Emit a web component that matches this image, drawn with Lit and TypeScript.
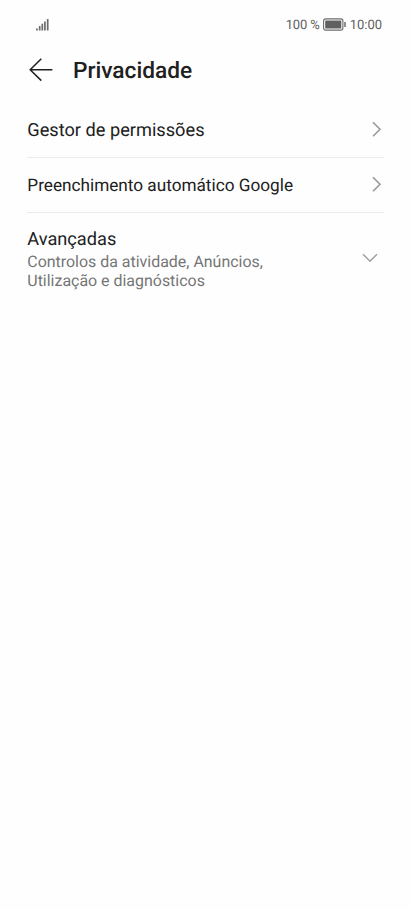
import { LitElement, html, css } from "lit";
import { customElement } from "lit/decorators.js";

@customElement("app-root")
export class AppRoot extends LitElement {
  static styles = css`
    :host { display: block; height: 910px; background: #fefefe; color: #202020; font-family: Roboto, sans-serif; overflow: hidden; text-rendering: geometricPrecision; }
    svg { display: block; fill: none; flex: none; }
    .status { height: 48px; box-sizing: border-box; padding: 1px 29px 0 36px; display: flex; align-items: center; font-size: 13px; color: #606060; }
    .status span { padding-top: 2px; }
    .percent { letter-spacing: -.15px; }
    .signal { margin-right: auto; }
    .battery { margin: 0 4px 0 3px; }
    header { height: 44px; display: flex; align-items: center; padding: 0 28px; gap: 19px; }
    h1 { margin: 2px 0 0; font-size: 22.7px; font-weight: 500; line-height: 28px; }
    main { padding: 11px 27px 0 27.3px; }
    .row { height: 54px; display: flex; align-items: center; justify-content: space-between; border-bottom: 1px solid #ebebeb; font-size: 18.2px; }
    .row.compact { font-size: 17.2px; }
    .compact span { padding-top: 2px; }
    .row svg { margin: 0 2px 2px 0; }
    .advanced { display: flex; justify-content: space-between; align-items: center; padding: 15px 6px 0 0; }
    .advanced svg { margin-bottom: 2px; }
    .title { font-size: 18.2px; line-height: 24px; }
    .detail { margin: 0; width: 260px; font-size: 15.95px; line-height: 19px; color: #757575; }
  `;

  chevron() {
    return html`<svg width="10" height="16" viewBox="0 0 10 16"><path d="M1 1.2 8 8.2 1 15.2" stroke="#999" stroke-width="1.6"/></svg>`;
  }

  render() {
    return html`
      <div class="status">
        <svg class="signal" width="14" height="12" viewBox="0 0 14 12"><path d="M.9 9.5v2M3.7 7V11.5M6.3 4.7v6.8M8.9 2.4V11.5M11.7 0V11.5" stroke="#6b6b6b" stroke-width="1.7"/></svg>
        <span class="percent">100 %</span>
        <svg class="battery" width="23" height="13" viewBox="0 0 23 13"><rect x=".6" y=".9" width="19.3" height="11.2" rx="2.2" stroke="#6b6b6b" stroke-width="1.1"/><rect x="2.2" y="2.5" width="16.1" height="8" rx=".5" fill="#606060"/><path d="M22 4v5" stroke="#6b6b6b" stroke-width="1.5"/></svg>
        <span>10:00</span>
      </div>
      <header>
        <svg width="26" height="24" viewBox="0 0 26 24"><path d="M24.4 11.7H2.2M13.3.8 2.2 11.7 13.3 22.6" stroke="#202020" stroke-width="1.5"/></svg>
        <h1>Privacidade</h1>
      </header>
      <main>
        <div class="row"><span>Gestor de permissões</span>${this.chevron()}</div>
        <div class="row compact"><span>Preenchimento automático Google</span>${this.chevron()}</div>
        <div class="advanced">
          <div><div class="title">Avançadas</div><p class="detail">Controlos da atividade, Anúncios, Utilização e diagnósticos</p></div>
          <svg width="16" height="10" viewBox="0 0 16 10"><path d="M1 1.2 8 8.2 15 1.2" stroke="#a3a3a3" stroke-width="1.6"/></svg>
        </div>
      </main>`;
  }
}
